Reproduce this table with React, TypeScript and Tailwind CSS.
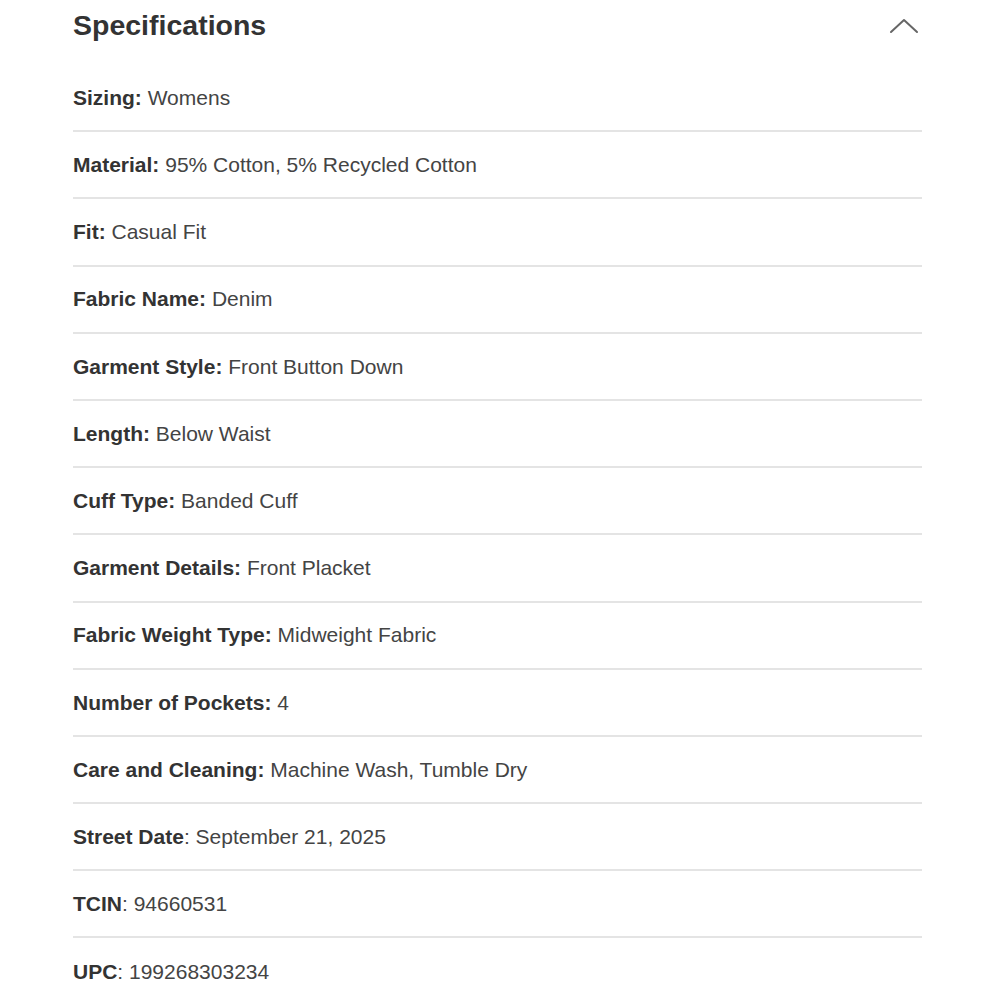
import React from 'react';

interface Spec {
  label: string;
  value: string;
}

const specs: Spec[] = [
  { label: 'Sizing:', value: 'Womens' },
  { label: 'Material:', value: '95% Cotton, 5% Recycled Cotton' },
  { label: 'Fit:', value: 'Casual Fit' },
  { label: 'Fabric Name:', value: 'Denim' },
  { label: 'Garment Style:', value: 'Front Button Down' },
  { label: 'Length:', value: 'Below Waist' },
  { label: 'Cuff Type:', value: 'Banded Cuff' },
  { label: 'Garment Details:', value: 'Front Placket' },
  { label: 'Fabric Weight Type:', value: 'Midweight Fabric' },
  { label: 'Number of Pockets:', value: '4' },
  { label: 'Care and Cleaning:', value: 'Machine Wash, Tumble Dry' },
  { label: 'Street Date', value: 'September 21, 2025' },
  { label: 'TCIN', value: '94660531' },
  { label: 'UPC', value: '199268303234' },
];

const App: React.FC = () => {
  return (
    <div className="w-[1000px] h-[1000px] bg-white overflow-hidden font-['Liberation_Sans',Arial,sans-serif] text-[#333]">
      <div className="ml-[73px] w-[849px]">
        <div className="flex items-center justify-between h-[50px]">
          <h2 className="text-[28.5px] font-bold text-[#333] leading-none">Specifications</h2>
          <svg width="30" height="18" viewBox="0 0 30 18" className="mr-[3px] mt-[2px]" fill="none">
            <path d="M2 15 L15 3 L28 15" stroke="#666" strokeWidth="2" strokeLinecap="round" strokeLinejoin="round" />
          </svg>
        </div>
        <div className="pt-[15px]">
          {specs.map((s, i) => (
            <div
              key={s.label}
              className={`flex items-center h-[67.2px] text-[21px] ${i < specs.length - 1 ? 'border-b-2 border-[#e4e4e4]' : ''}`}
            >
              <span className="font-bold text-[#333]">{s.label}</span>
              {s.label.endsWith(':') ? <span>&nbsp;</span> : <span className="text-[#444]">:&nbsp;</span>}
              <span className="text-[#444]">{s.value}</span>
            </div>
          ))}
        </div>
      </div>
    </div>
  );
};

export default App;
